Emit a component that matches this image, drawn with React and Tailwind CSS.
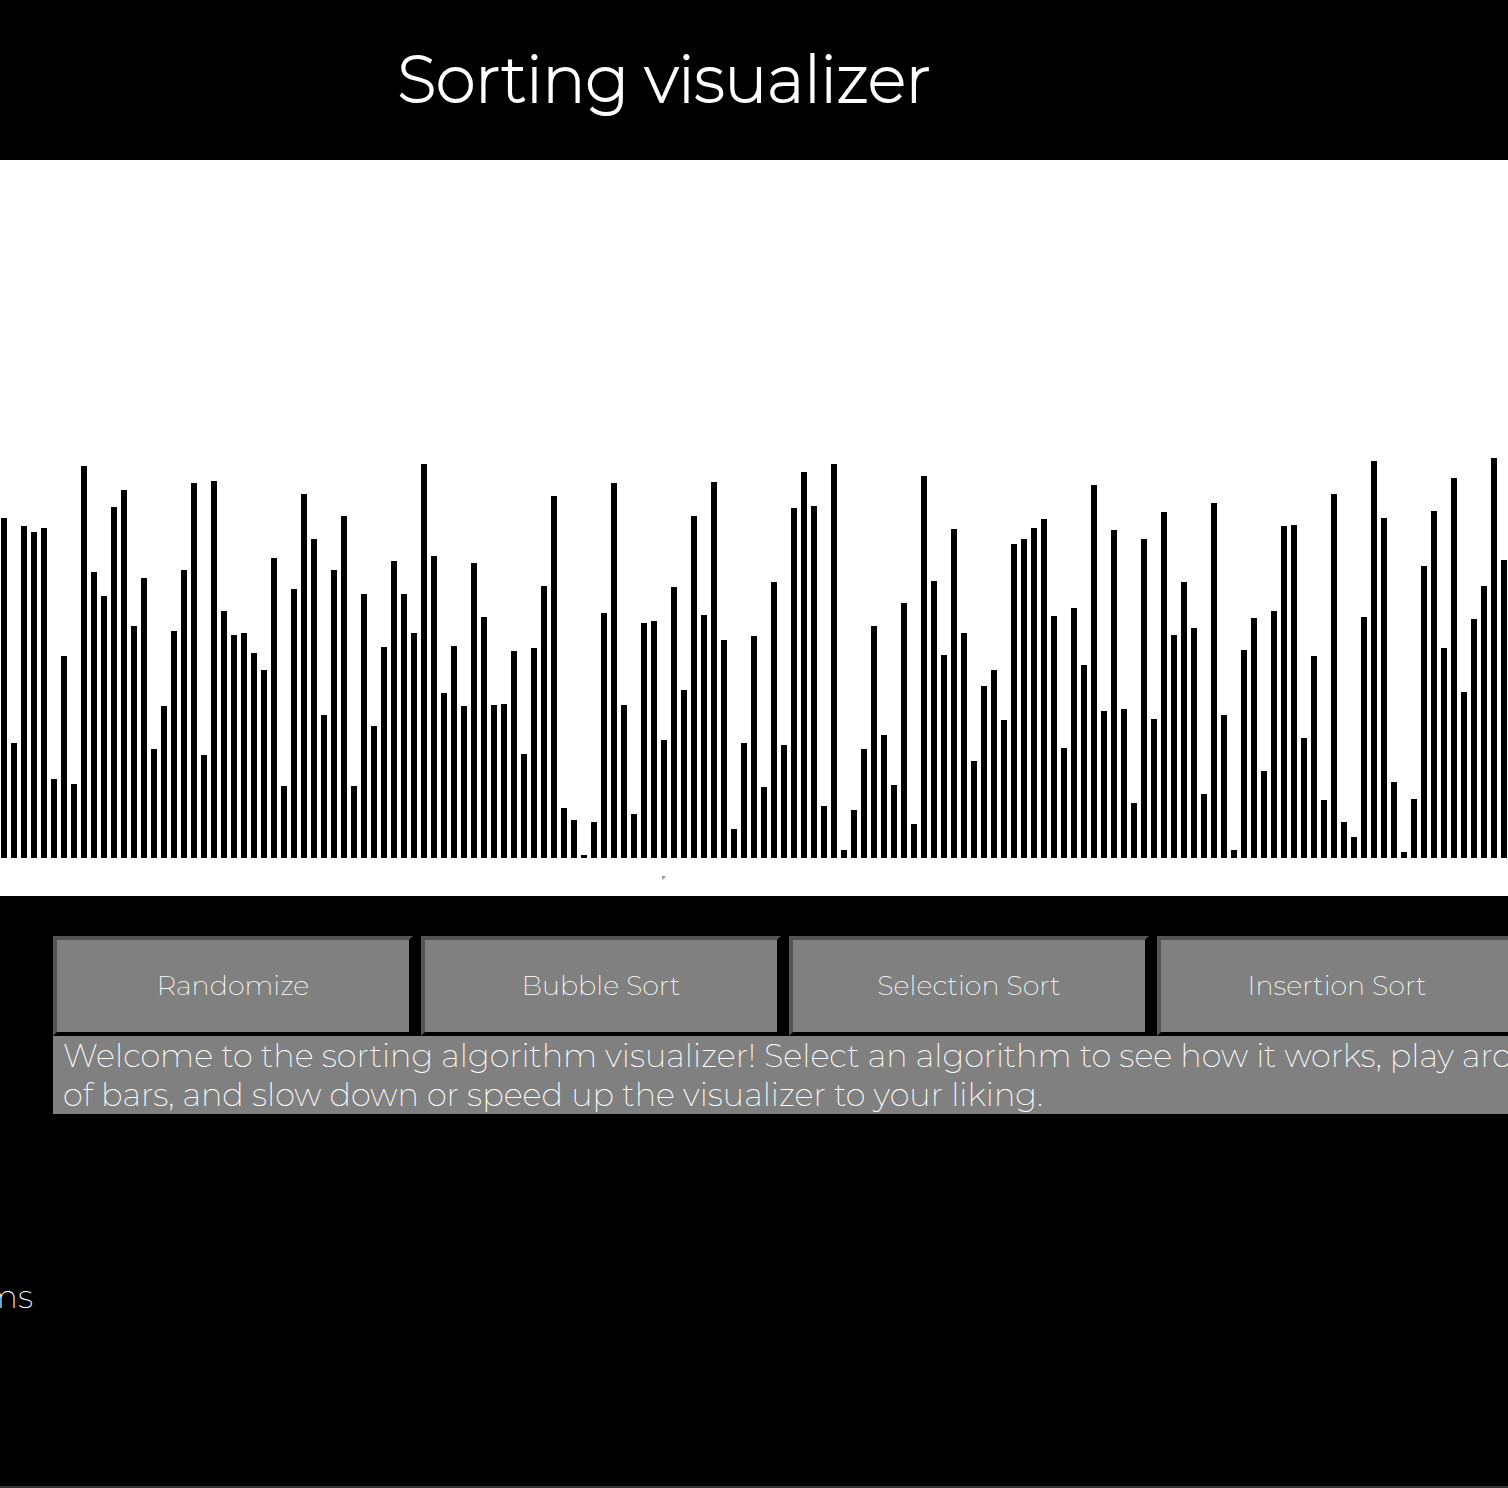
const heights = [
  340, 115, 332, 326, 330, 79, 202, 74, 392, 286, 262, 351, 368, 232, 280, 109, 152, 227, 288, 375,
  103, 377, 247, 223, 225, 205, 188, 300, 72, 269, 364, 319, 143, 288, 342, 72, 264, 132, 211, 297,
  264, 225, 394, 302, 165, 212, 152, 295, 241, 153, 154, 207, 104, 210, 272, 362, 50, 38, 3, 36,
  245, 375, 153, 44, 235, 237, 118, 271, 168, 342, 243, 376, 218, 29, 115, 222, 71, 276, 113, 350,
  386, 352, 52, 394, 8, 48, 109, 232, 123, 73, 255, 34, 382, 277, 203, 329, 225, 97, 172, 188,
  138, 314, 319, 330, 339, 242, 110, 250, 193, 373, 147, 328, 149, 55, 319, 139, 346, 223, 276, 230,
  64, 355, 143, 8, 208, 240, 87, 247, 332, 333, 120, 202, 58, 364, 36, 21, 241, 397, 340, 76,
  6, 59, 292, 347, 210, 380, 166, 239, 272, 400, 298,
];

const actions = ["Randomize", "Bubble Sort", "Selection Sort", "Insertion Sort"];

export default function App() {
  return (
    <div className="flex min-h-screen flex-col overflow-hidden bg-black font-['Montserrat','Inter',sans-serif] font-extralight text-white">
      <header className="flex h-40 items-center justify-center pr-[180px] pb-0.5">
        <h1 className="text-[64px] leading-[78px] [-webkit-text-stroke:2px_white]">Sorting visualizer</h1>
      </header>

      <section aria-label="Bars" className="bg-white pb-4">
        <div className="flex h-[698px] items-end gap-1 pl-px">
          {heights.map((height, i) => (
            <div key={i} className="w-1.5 shrink-0 bg-black" style={{ height }} />
          ))}
        </div>
        <div className="mt-[18px] flex justify-center pr-[180px]">
          <span className="border-2 border-t-[#999999] border-r-[#eeeeee] border-b-[#eeeeee] border-l-[#999999]" />
        </div>
      </section>

      <main className="grow pt-10">
        <div className="ml-[53px] w-max">
          <div className="flex gap-2">
            {actions.map((label) => (
              <button
                key={label}
                type="button"
                className="h-[100px] w-[360px] border-4 border-black bg-[#808080] text-[27px] [border-style:outset]"
              >
                {label}
              </button>
            ))}
          </div>
          <p className="bg-[#808080] pl-2.5 text-[32px] leading-[39px] whitespace-nowrap">
            Welcome to the sorting algorithm visualizer! Select an algorithm to see how it works, play around with the number
            <br />
            of bars, and slow down or speed up the visualizer to your liking.
          </p>
        </div>
        <div className="mt-[163px] flex w-[33px] justify-end text-[32px] leading-[39px]">
          <span>ms</span>
        </div>
      </main>

      <footer className="h-0.5 bg-[#333333]" />
    </div>
  );
}
